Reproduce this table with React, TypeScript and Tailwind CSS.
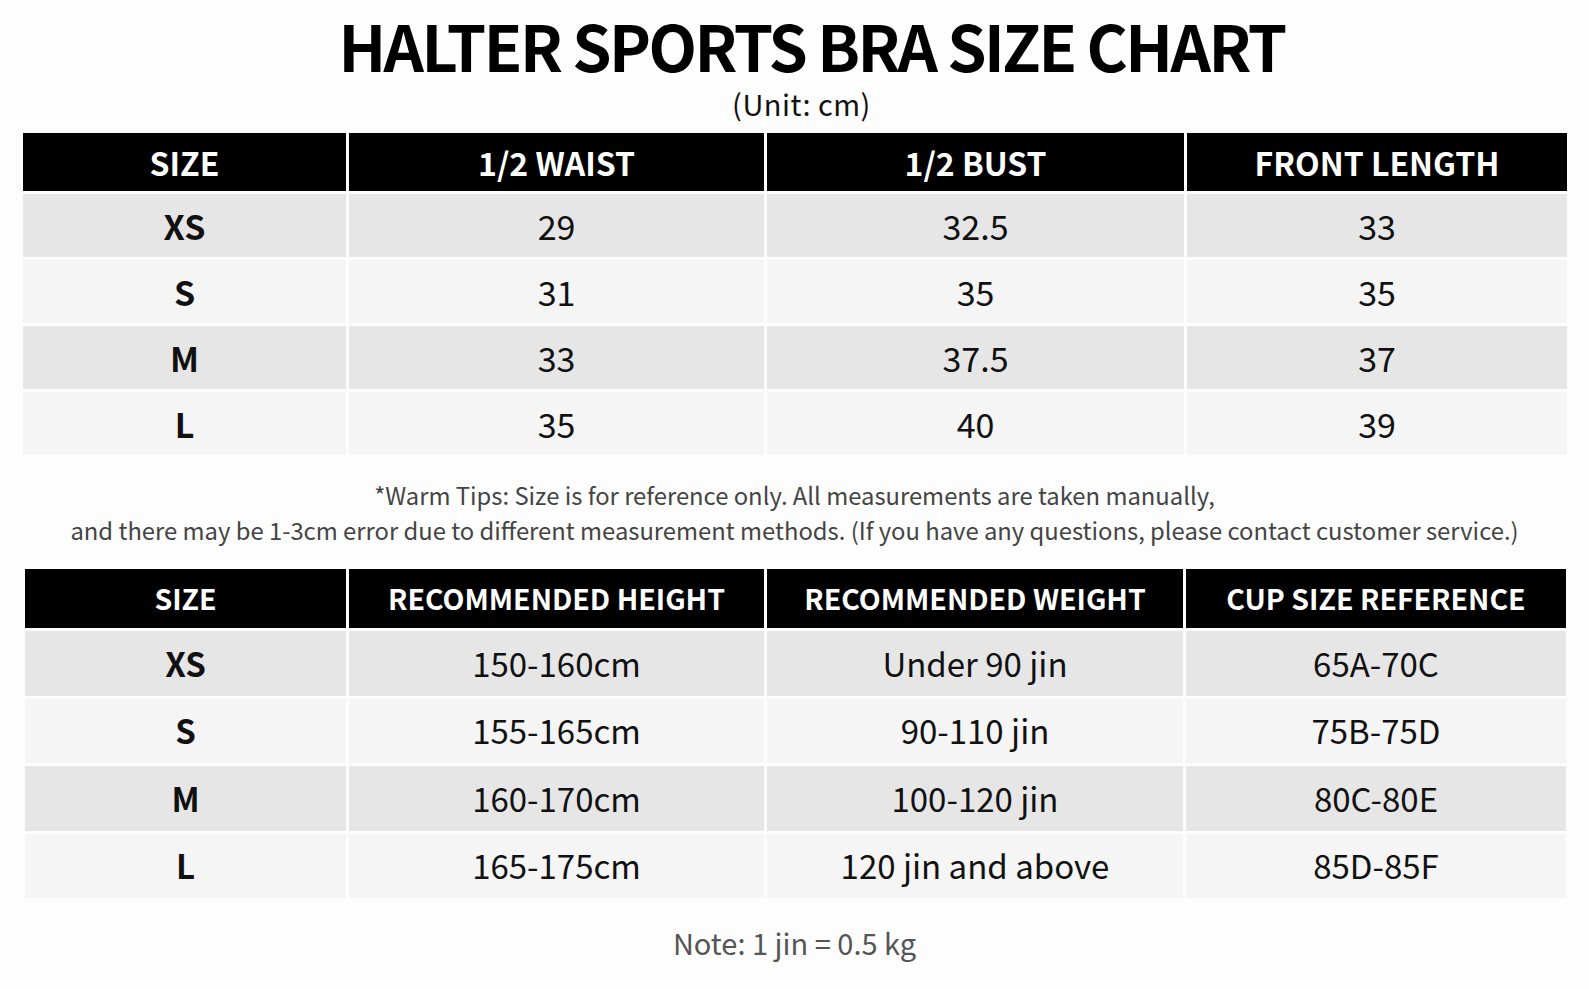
const font = "font-['Noto_Sans_CJK_SC','Noto_Sans',sans-serif]";

type TableProps = {
  headers: string[];
  rows: string[][];
  cols: string;
  headH: string;
  rowH: string;
  headText: string;
  bodyText: string;
  margin: string;
};

function SizeTable({ headers, rows, cols, headH, rowH, headText, bodyText, margin }: TableProps) {
  return (
    <div className={`grid gap-[3px] ${cols} ${margin}`}>
      {headers.map((h) => (
        <div key={h} className={`flex items-center justify-center bg-black font-bold text-white ${headH} ${headText}`}>
          {h}
        </div>
      ))}
      {rows.map((r, i) =>
        r.map((c, j) => (
          <div
            key={`${i}-${j}`}
            className={`flex items-center justify-center text-[#111] ${bodyText} ${rowH} ${
              i % 2 === 0 ? "bg-[#e6e6e6]" : "bg-[#f5f5f5]"
            } ${j === 0 ? "font-bold" : ""}`}
          >
            {c}
          </div>
        ))
      )}
    </div>
  );
}

export default function App() {
  return (
    <div className={`min-h-[989px] w-full bg-[#fdfdfd] pt-[7px] ${font}`}>
      <h1 className="pl-[34px] text-center text-[63px] font-bold leading-[76px] tracking-[-2.5px] text-black">
        HALTER SPORTS BRA SIZE CHART
      </h1>
      <p className="pl-[14px] text-center text-[29px] leading-[40px] tracking-[0.5px] text-[#111]">(Unit: cm)</p>

      <div className="mt-[10px]">
        <SizeTable
          headers={["SIZE", "1/2 WAIST", "1/2 BUST", "FRONT LENGTH"]}
          rows={[
            ["XS", "29", "32.5", "33"],
            ["S", "31", "35", "35"],
            ["M", "33", "37.5", "37"],
            ["L", "35", "40", "39"],
          ]}
          cols="grid-cols-[323px_415px_417px_380px]"
          headH="h-[58px]"
          rowH="h-[63px]"
          headText="text-[32px]"
          bodyText="text-[34px]"
          margin="ml-[23px]"
        />
      </div>

      <div className="mt-[22px] text-center text-[23.8px] leading-[35px] text-[#444]">
        <p>*Warm Tips: Size is for reference only. All measurements are taken manually,</p>
        <p>
          and there may be 1-3cm error due to different measurement methods. (If you have any questions, please
          contact customer service.)
        </p>
      </div>

      <div className="mt-[22px]">
        <SizeTable
          headers={["SIZE", "RECOMMENDED HEIGHT", "RECOMMENDED WEIGHT", "CUP SIZE REFERENCE"]}
          rows={[
            ["XS", "150-160cm", "Under 90 jin", "65A-70C"],
            ["S", "155-165cm", "90-110 jin", "75B-75D"],
            ["M", "160-170cm", "100-120 jin", "80C-80E"],
            ["L", "165-175cm", "120 jin and above", "85D-85F"],
          ]}
          cols="grid-cols-[321px_415px_416px_380px]"
          headH="h-[59px]"
          rowH="h-[64.5px]"
          headText="text-[28.5px]"
          bodyText="text-[33px]"
          margin="ml-[25px]"
        />
      </div>

      <p className="mt-[26px] text-center text-[29px] leading-[36px] text-[#555]">Note: 1 jin = 0.5 kg</p>
    </div>
  );
}
